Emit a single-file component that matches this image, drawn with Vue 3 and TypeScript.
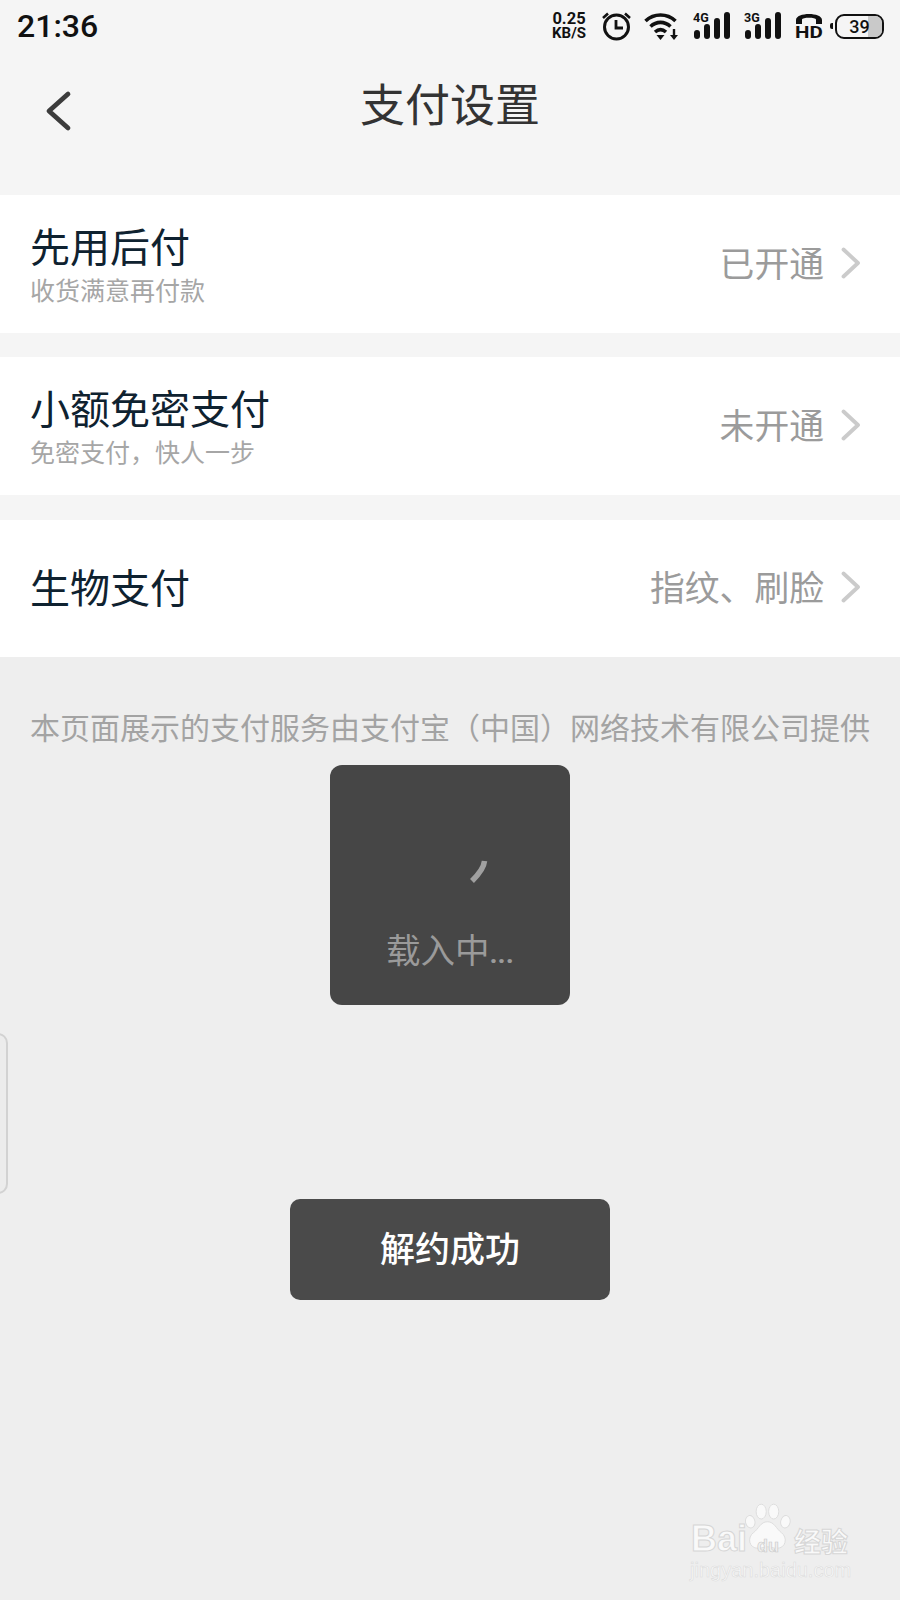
<template>
  <div class="page">
    <div class="status-bar">
      <span class="time">21:36</span>
      <div class="status-icons">
        <div class="speed"><span>0.25</span><span>KB/S</span></div>
        <svg class="alarm" width="31" height="30" viewBox="0 0 31 30" fill="none" stroke="#111">
          <circle cx="15.5" cy="16" r="12" stroke-width="3" />
          <path d="M15 9v8h7" stroke-width="2.8" />
          <path d="M2 7l5-4.500M29 7l-5-4.500" stroke-width="2.600" />
        </svg>
        <svg class="wifi" width="35" height="29" viewBox="0 0 35 29" fill="none" stroke="#111" stroke-width="3.600">
          <path d="M1.500 9C10 1 23 1 31.500 9" />
          <path d="M6.500 14.500C12.500 9 20.500 9 26.500 14.500" />
          <path d="M11 20c3.500-3 7.500-3 11 0" />
          <path d="M12.500 23h8l-4 5z" fill="#111" stroke="none" />
          <path d="M30 17v8" stroke-width="2.400" />
          <path d="M26 23h8l-4 5z" fill="#111" stroke="none" />
        </svg>
        <div v-for="net in ['4G', '3G']" :key="net" class="signal">
          <span class="net">{{ net }}</span>
          <i class="bar b1"></i><i class="bar b2"></i><i class="bar b3"></i><i class="bar b4"></i>
        </div>
        <div class="hd">
          <svg width="28" height="12" viewBox="0 0 28 12" fill="#111">
            <path d="M1 11V7C1 -1 27 -1 27 7v4h-6V6.500C21 4 7 4 7 6.500V11z" />
          </svg>
          <span>HD</span>
        </div>
        <div class="battery">
          <i class="battery-tip"></i>
          <div class="battery-body"><i class="battery-level"></i><span>39</span></div>
        </div>
      </div>
    </div>

    <header class="nav">
      <svg class="back" width="30" height="42" viewBox="0 0 30 42" fill="none">
        <path d="M24 4L5 21l19 17" stroke="#3c3c3c" stroke-width="4.800" stroke-linecap="round" stroke-linejoin="round" />
      </svg>
      <h1>支付设置</h1>
    </header>

    <section class="list">
      <div v-for="row in rows" :key="row.title" class="row">
        <div class="row-left" :class="{ single: !row.sub }">
          <div class="row-title">{{ row.title }}</div>
          <div v-if="row.sub" class="row-sub">{{ row.sub }}</div>
        </div>
        <div class="row-right">
          <span>{{ row.value }}</span>
          <svg width="20" height="32" viewBox="0 0 20 32" fill="none">
            <path d="M2.500 2.500L17 16 2.500 29.500" stroke="#cbcbcb" stroke-width="3.800" stroke-linecap="round" stroke-linejoin="round" />
          </svg>
        </div>
      </div>
    </section>

    <main class="content">
      <p class="notice">本页面展示的支付服务由支付宝（中国）网络技术有限公司提供</p>
    </main>

    <div class="loading">
      <svg class="spinner" width="24" height="26" viewBox="0 0 24 26" fill="none">
        <path d="M18.500 2C18 8 14 14 6 22" stroke="#a0a0a0" stroke-width="5.500" />
      </svg>
      <div class="loading-text">载入中<span>...</span></div>
    </div>

    <div class="toast">解约成功</div>

    <div class="side-handle"></div>

    <div class="watermark">
      <div class="logo-line">
        <span class="bai">Bai</span>
        <svg class="paw" width="50" height="50" viewBox="0 0 64 64" fill="#f9f9f9" stroke="#dcdcdc" stroke-width="1.200">
          <ellipse cx="8" cy="24" rx="6" ry="8" transform="rotate(-12 8 24)" />
          <ellipse cx="22" cy="11" rx="6.500" ry="9.500" />
          <ellipse cx="38" cy="11" rx="6.500" ry="9.500" />
          <ellipse cx="53" cy="24" rx="6" ry="8" transform="rotate(12 53 24)" />
          <path d="M30 24c9 0 11 9 18 14 8 6 6 20-6 20-5 0-8-2-12-2s-7 2-12 2C6 58 4 44 12 38c7-5 9-14 18-14z" />
        </svg>
        <span class="du">du</span>
        <span class="jy">经验</span>
      </div>
      <div class="domain">jingyan.baidu.com</div>
    </div>
  </div>
</template>

<script setup lang="ts">
interface Row {
  title: string;
  sub?: string;
  value: string;
}

const rows: Row[] = [
  { title: '先用后付', sub: '收货满意再付款', value: '已开通' },
  { title: '小额免密支付', sub: '免密支付，快人一步', value: '未开通' },
  { title: '生物支付', value: '指纹、刷脸' }
];
</script>

<style>
html,
body {
  margin: 0;
  background: #eeeeee;
}
</style>

<style scoped>
.page {
  position: relative;
  width: 900px;
  height: 1600px;
  overflow: hidden;
  display: flex;
  flex-direction: column;
  background: #f5f5f5;
  font-family: "Noto Sans CJK SC", "Noto Sans", sans-serif;
}

.status-bar {
  height: 52px;
  padding: 0 17px;
  display: flex;
  align-items: center;
  justify-content: space-between;
  color: #111;
}

.time {
  font-family: Roboto, sans-serif;
  font-size: 32px;
  font-weight: 500;
  line-height: 50px;
}

.status-icons {
  display: flex;
  align-items: center;
  margin-right: -1px;
}

.speed {
  width: 36px;
  margin-right: 14px;
  display: flex;
  flex-direction: column;
  align-items: center;
  font-family: Roboto, sans-serif;
  font-weight: 700;
  line-height: 14px;
}

.speed span:first-child {
  font-size: 16.500px;
}

.speed span:last-child {
  font-size: 15px;
}

.alarm {
  margin-right: 12px;
}

.wifi {
  margin-right: 14px;
}

.signal {
  position: relative;
  width: 37px;
  height: 28px;
  margin-right: 14px;
  margin-bottom: 2px;
}

.net {
  position: absolute;
  left: 0;
  top: 0;
  font-family: Roboto, sans-serif;
  font-size: 12.500px;
  font-weight: 700;
  line-height: 14px;
}

.bar {
  position: absolute;
  bottom: 0;
  width: 6px;
  border-radius: 3px;
  background: #111;
}

.b1 {
  left: 1px;
  height: 9px;
}

.b2 {
  left: 11px;
  height: 15px;
}

.b3 {
  left: 21px;
  height: 21px;
}

.b4 {
  left: 31px;
  height: 27px;
}

.hd {
  width: 28px;
  margin-right: 7px;
  display: flex;
  flex-direction: column;
  align-items: center;
}

.hd svg {
  display: block;
}

.hd span {
  font-family: Roboto, sans-serif;
  font-size: 20.500px;
  font-weight: 700;
  line-height: 15px;
  transform: scaleY(0.85);
}

.battery {
  display: flex;
  align-items: center;
}

.battery-tip {
  width: 3px;
  height: 6px;
  margin-right: 2px;
  background: #111;
  border-radius: 2px 0 0 2px;
}

.battery-body {
  position: relative;
  width: 49px;
  height: 25px;
  border: 2px solid #111;
  border-radius: 9px;
  box-sizing: border-box;
  overflow: hidden;
  text-align: center;
  font-family: Roboto, sans-serif;
  font-size: 18px;
  font-weight: 500;
  line-height: 21px;
}

.battery-body span {
  position: relative;
}

.battery-level {
  position: absolute;
  top: 0;
  bottom: 0;
  right: 0;
  width: 14px;
  background: #c9c9c9;
}

.nav {
  position: relative;
  height: 105px;
  display: flex;
  align-items: flex-start;
  justify-content: center;
}

.back {
  position: absolute;
  left: 44px;
  top: 38px;
}

.nav h1 {
  margin: 23px 0 0;
  font-size: 45px;
  font-weight: 400;
  line-height: 56px;
  color: #333;
}

.list {
  display: flex;
  flex-direction: column;
  gap: 24.750px;
  margin-top: 38px;
}

.row {
  height: 137.500px;
  padding: 0 39px 0 30px;
  display: flex;
  align-items: center;
  justify-content: space-between;
  background: #fff;
}

.row-title {
  font-size: 40px;
  line-height: 46px;
  margin-bottom: 6px;
  color: #0f2230;
}

.row-left.single .row-title {
  margin-bottom: 0;
  padding-bottom: 4px;
}

.row-sub {
  font-size: 25px;
  line-height: 30px;
  color: #a6a6a6;
  margin-bottom: 2px;
}

.row-right {
  display: flex;
  align-items: center;
  gap: 17px;
  font-size: 34.800px;
  line-height: 44px;
  color: #9b9b9b;
}

.row-right span {
  margin-bottom: 4px;
}

.row-right svg {
  margin-bottom: 2px;
}

.content {
  flex: 1;
  background: #eeeeee;
}

.notice {
  margin: 49px 0 0;
  padding-left: 30px;
  font-size: 30px;
  line-height: 40px;
  color: #a3a3a3;
  white-space: nowrap;
}

.loading {
  position: absolute;
  left: 330px;
  top: 765px;
  width: 240px;
  height: 240px;
  border-radius: 12px;
  background: #464646;
}

.spinner {
  position: absolute;
  left: 136px;
  top: 94px;
}

.loading-text {
  position: absolute;
  left: 56px;
  top: 161px;
  font-size: 34.500px;
  line-height: 44px;
  color: #9a9a9a;
  white-space: nowrap;
}

.loading-text span {
  font-family: Roboto, sans-serif;
  font-size: 28px;
  font-weight: 700;
}

.toast {
  position: absolute;
  left: 290px;
  top: 1199px;
  width: 320px;
  height: 101px;
  box-sizing: border-box;
  padding-bottom: 7px;
  border-radius: 10px;
  background: #4a4a4a;
  color: #fff;
  display: flex;
  align-items: center;
  justify-content: center;
  font-size: 35px;
  font-weight: 500;
}

.side-handle {
  position: absolute;
  left: -14px;
  top: 1033px;
  width: 18px;
  height: 157px;
  border: 2px solid #d2d2d2;
  border-radius: 10px;
  background: #ececec;
}

.watermark {
  position: absolute;
  left: 690px;
  top: 1503px;
  width: 170px;
  color: #f9f9f9;
}

.logo-line {
  position: relative;
  height: 52px;
  font-family: "Liberation Sans", sans-serif;
  font-weight: 700;
  -webkit-text-stroke: 1px #d6d6d6;
}

.bai {
  position: absolute;
  left: 1px;
  top: 14px;
  font-size: 36px;
  line-height: 44px;
}

.paw {
  position: absolute;
  left: 54px;
  top: 0;
}

.du {
  position: absolute;
  left: 67px;
  top: 32px;
  font-size: 18px;
  line-height: 22px;
  color: #f0f0f0;
  -webkit-text-stroke: 0.600px #c8c8c8;
}

.jy {
  position: absolute;
  left: 104px;
  top: 20px;
  font-family: "Noto Sans CJK SC", sans-serif;
  font-size: 27px;
  line-height: 36px;
}

.domain {
  margin: 3px 0 0 0;
  font-family: "Liberation Sans", sans-serif;
  font-size: 20px;
  line-height: 24px;
  white-space: nowrap;
  -webkit-text-stroke: 0.600px #dcdcdc;
}
</style>
